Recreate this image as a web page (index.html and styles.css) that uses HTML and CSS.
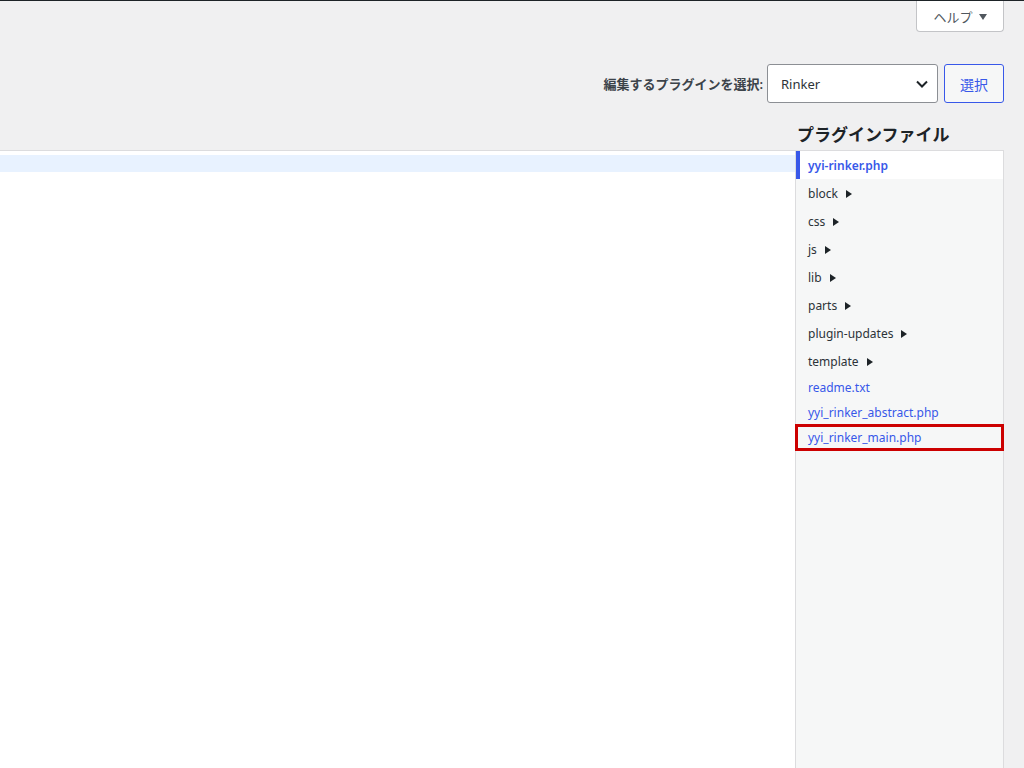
FILE: index.html
```html
<!DOCTYPE html>
<html>
<head>
  <title>プラグインファイルエディター</title>
  <link rel="stylesheet" href="styles.css">
</head>
<body>

  <div class="wrap">
    <div class="help-row">
      <button class="help-btn">ヘルプ <span class="down"></span></button>
    </div>

    <div class="select-row">
      <label class="select-label">編集するプラグインを選択:</label>
      <div class="select-box">
        <span>Rinker</span>
        <svg width="14" height="10" viewBox="0 0 14 10"><polyline points="2,2.5 7,7.5 12,2.5" fill="none" stroke="#1d2327" stroke-width="2"/></svg>
      </div>
      <button class="select-btn">選択</button>
    </div>

    <div class="editor-layout">
      <h2 class="files-title">プラグインファイル</h2>

      <div class="editor">
        <div class="active-line"></div>
      </div>

      <ul class="tree">
        <li class="file current"><a>yyi-rinker.php</a></li>
        <li class="folder">block</li>
        <li class="folder">css</li>
        <li class="folder">js</li>
        <li class="folder">lib</li>
        <li class="folder">parts</li>
        <li class="folder">plugin-updates</li>
        <li class="folder">template</li>
        <li class="file"><a>readme.txt</a></li>
        <li class="file"><a>yyi_rinker_abstract.php</a></li>
        <li class="file marked"><a>yyi_rinker_main.php</a></li>
      </ul>
    </div>
  </div>

</body>
</html>
```

FILE: styles.css
```css
body {
  margin: 0;
  background: #f0f0f1;
  border-top: 1px solid #1d2327;
  font-family: "Noto Sans", "Noto Sans CJK JP", sans-serif;
  font-size: 13px;
  color: #3c434a;
  height: 767px;
  overflow: hidden;
}

.wrap {
  padding-right: 20px;
}

.help-row {
  display: flex;
  justify-content: flex-end;
}

.help-btn {
  width: 88px;
  height: 31px;
  background: white;
  border: 1px solid #c3c4c7;
  border-top: none;
  border-radius: 0 0 4px 4px;
  font-family: inherit;
  font-size: 13px;
  color: #50575e;
  display: flex;
  align-items: center;
  justify-content: center;
  gap: 6px;
  padding: 0;
}

.down {
  width: 0;
  height: 0;
  border-left: 4px solid transparent;
  border-right: 4px solid transparent;
  border-top: 6px solid #50575e;
  margin-top: 1px;
}

.select-row {
  display: flex;
  justify-content: flex-end;
  align-items: center;
  margin-top: 32px;
}

.select-label {
  font-weight: 600;
  color: #3c434a;
  margin-right: 4px;
}

.select-box {
  height: 37px;
  background: white;
  border: 1px solid #8c8f94;
  border-radius: 3px;
  display: flex;
  align-items: center;
  justify-content: space-between;
  padding: 0 8px 0 13px;
  width: 148px;
  font-size: 13px;
  color: #2c3338;
}

.select-btn {
  width: 60px;
  height: 39px;
  margin-left: 6px;
  background: #f6f7f7;
  border: 1px solid #3858e9;
  border-radius: 3px;
  color: #3858e9;
  font-family: inherit;
  font-size: 14px;
  padding: 0;
}

.editor-layout {
  display: grid;
  grid-template-columns: 1fr 209px;
  grid-template-rows: auto 1fr;
  margin-top: 17px;
}

.files-title {
  grid-column: 2;
  grid-row: 1;
  margin: 0 0 1px 2px;
  font-size: 17px;
  line-height: 29px;
  font-weight: 700;
  color: #1d2327;
}

.editor {
  grid-column: 1;
  grid-row: 2;
  background: white;
  border-top: 1px solid #dcdcde;
  height: 640px;
  padding-top: 4px;
}

.active-line {
  height: 17px;
  background: #e8f2ff;
}

.tree {
  grid-column: 2;
  grid-row: 2;
  list-style: none;
  margin: 0;
  padding: 0;
  background: #f6f7f7;
  border: 1px solid #dcdcde;
  border-bottom: none;
  height: 640px;
  font-size: 12px;
}

.tree li {
  padding-left: 12px;
  line-height: 26px;
  height: 25px;
}

.tree .folder {
  line-height: 29px;
  height: 28px;
  color: #2c3338;
}

.tree .folder::after {
  content: "";
  display: inline-block;
  margin-left: 8px;
  border-top: 4px solid transparent;
  border-bottom: 4px solid transparent;
  border-left: 6px solid #1d2327;
}

.tree a {
  color: #3858e9;
}

.tree .current {
  background: white;
  border-left: 4px solid #3858e9;
  padding-left: 8px;
  line-height: 29px;
  height: 28px;
}

.tree .current a {
  font-weight: 600;
}

.tree .marked {
  outline: 3px solid #c00;
  outline-offset: -2px;
}
```
